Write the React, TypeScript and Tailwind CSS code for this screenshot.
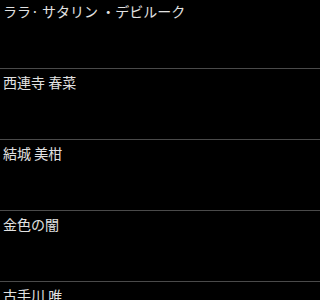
import React from "react";

const names = [
  "ララ· サタリン ・デビルーク",
  "西連寺 春菜",
  "結城 美柑",
  "金色の闇",
  "古手川 唯",
];

export default function App() {
  return (
    <div
      className="w-[320px] h-[300px] overflow-hidden bg-black"
      style={{ fontFamily: '"Noto Sans CJK JP", "Noto Sans", sans-serif' }}
    >
      {names.map((n, i) => (
        <div
          key={i}
          className={`${i === 0 ? "h-[69px] pt-[1px]" : "h-[71px] pt-[3px]"} border-b border-[#4a4a4a] pl-[3px] text-[14px] leading-[20px] text-[#e2e2e2]`}
        >
          {n}
        </div>
      ))}
    </div>
  );
}
